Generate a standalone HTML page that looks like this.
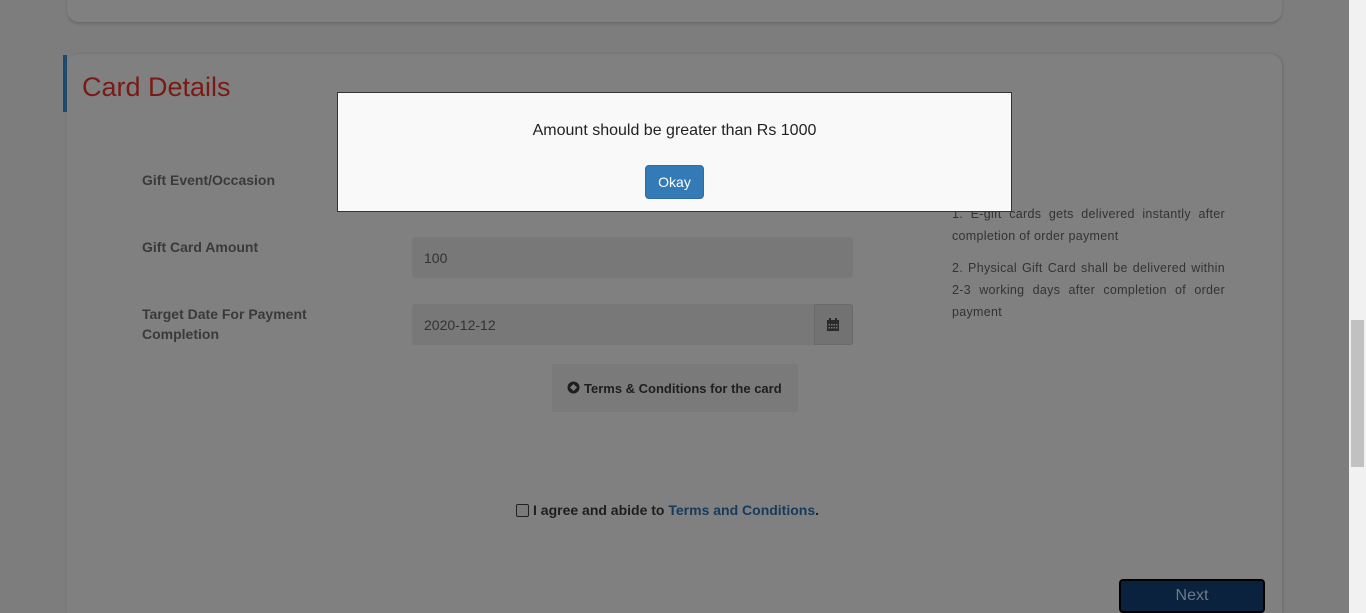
<!DOCTYPE html>
<html style="height:613px;overflow:hidden"><head><style>
body{margin:0;width:1366px;height:613px;overflow:hidden;background:#7d7d7d;font-family:"Liberation Sans",Arial,sans-serif;position:relative}
.a{position:absolute}
.lbl{font-weight:bold;font-size:14px;color:#3a3a3a;line-height:20px}
.inp{background:#787878;border-radius:3px;font-size:14px;color:#333;padding-left:12px;box-sizing:border-box;line-height:42px}
.note{font-size:12.5px;color:#333;line-height:22px;text-align:justify;letter-spacing:0.3px}
</style></head><body>
<div class="a" style="left:67px;top:-20px;width:1215px;height:42px;background:#808080;border-radius:0 0 12px 12px;box-shadow:0 2px 2px #6a6a6a"></div>
<div class="a" style="left:67px;top:54px;width:1215px;height:559px;background:#808080;border-radius:12px 12px 0 0;box-shadow:1px 0 2px #6a6a6a"></div>
<div class="a" style="left:63px;top:55px;width:4px;height:57px;background:#1e4a6e"></div>
<div class="a" style="left:82px;top:72px;font-size:27px;color:#7a1a14">Card Details</div>
<div class="a lbl" style="left:142px;top:170px">Gift Event/Occasion</div>
<div class="a lbl" style="left:142px;top:237px">Gift Card Amount</div>
<div class="a lbl" style="left:142px;top:304px">Target Date For Payment<br>Completion</div>
<div class="a inp" style="left:412px;top:237px;width:441px;height:41px">100</div>
<div class="a inp" style="left:412px;top:304px;width:441px;height:41px">2020-12-12</div>
<div class="a" style="left:814px;top:304px;width:39px;height:41px;background:#727272;border-radius:0 3px 3px 0;border:1px solid #6a6a6a;box-sizing:border-box"></div>
<svg class="a" style="left:826px;top:318px" width="14" height="14" viewBox="0 0 14 14"><rect x="1" y="2" width="12" height="11" fill="#2a2a2a"/><rect x="3" y="0" width="2" height="3" fill="#2a2a2a"/><rect x="9" y="0" width="2" height="3" fill="#2a2a2a"/><g fill="#777"><rect x="2.5" y="6" width="1.5" height="1.5"/><rect x="5" y="6" width="1.5" height="1.5"/><rect x="7.5" y="6" width="1.5" height="1.5"/><rect x="10" y="6" width="1.5" height="1.5"/><rect x="2.5" y="9" width="1.5" height="1.5"/><rect x="5" y="9" width="1.5" height="1.5"/><rect x="7.5" y="9" width="1.5" height="1.5"/><rect x="10" y="9" width="1.5" height="1.5"/></g></svg>
<div class="a" style="left:552px;top:364px;width:246px;height:48px;background:#7a7a7a"></div>
<svg class="a" style="left:567px;top:381px" width="13" height="13" viewBox="0 0 13 13"><circle cx="6.5" cy="6.5" r="6" fill="#1e1e1e"/><rect x="4" y="4" width="5" height="5" fill="#7a7a7a" transform="rotate(45 6.5 6.5)"/></svg>
<div class="a" style="left:584px;top:381px;font-size:13px;font-weight:bold;color:#1e1e1e">Terms &amp; Conditions for the card</div>
<div class="a note" style="left:952px;top:203px;width:273px">1. E-gift cards gets delivered instantly after completion of order payment</div>
<div class="a note" style="left:952px;top:257px;width:273px">2. Physical Gift Card shall be delivered within 2-3 working days after completion of order payment</div>
<div class="a" style="left:516px;top:504px;width:11px;height:11px;border:1px solid #222;border-radius:2px;background:#7a7a7a"></div>
<div class="a" style="left:533px;top:502px;font-size:14px;font-weight:bold;color:#1e1e1e">I agree and abide to <span style="color:#163a5c">Terms and Conditions</span>.</div>
<div class="a" style="left:1119px;top:579px;width:146px;height:34px;background:#0a223e;border:2px solid #000;border-radius:4px;box-sizing:border-box;color:#6c7a88;font-size:16px;text-align:center;line-height:30px">Next</div>
<div class="a" style="left:1349px;top:0;width:17px;height:613px;background:#f1f1f1"></div>
<div class="a" style="left:1351px;top:320px;width:13px;height:147px;background:#c1c1c1"></div>
<div class="a" style="left:337px;top:92px;width:675px;height:120px;background:#f9f9f9;border:1px solid #333;box-sizing:border-box"></div>
<div class="a" style="left:337px;top:122px;width:675px;text-align:center;font-size:16px;color:#222">Amount should be greater than Rs 1000</div>
<div class="a" style="left:645px;top:165px;width:59px;height:34px;background:#337ab7;border:1px solid #2e6da4;border-radius:4px;box-sizing:border-box;color:#fff;font-size:14px;text-align:center;line-height:32px">Okay</div>
</body></html>
